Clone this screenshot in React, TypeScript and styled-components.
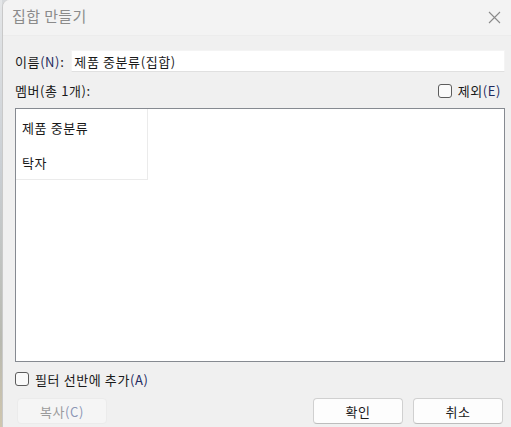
import React from "react";
import styled, { createGlobalStyle } from "styled-components";

const Global = createGlobalStyle`
  html, body { margin: 0; padding: 0; background: #f0f0f0; }
  body { font-family: "Noto Sans CJK KR", "Noto Sans", sans-serif; font-size: 13px; color: #1a1a1a; letter-spacing: 0.6px; }
`;

const Screen = styled.div`
  width: 511px;
  height: 427px;
  display: flex;
  overflow: hidden;
  background: #d6d9dc;
`;

const Edge = styled.div`
  width: 2px;
  background: linear-gradient(#e4e6e8, #c9ced3 40%, #b8b9b0 80%, #d0c6ae);
`;

const Window = styled.div`
  flex: 1;
  display: flex;
  flex-direction: column;
  background: #f0f0f0;
  border-top-left-radius: 7px;
  border-left: 1px solid #c9c9c9;
`;

const TitleBar = styled.div`
  height: 36px;
  display: flex;
  align-items: center;
  justify-content: space-between;
  padding: 0 8px 0 9px;
  background: #f3f3f3;
  border-bottom: 1px solid #ececec;
  box-sizing: border-box;
  border-top-left-radius: 7px;
`;

const Title = styled.span`
  font-size: 15px;
  letter-spacing: 0.4px;
  color: #8b8b8b;
  margin-top: -4px;
`;

const Close = styled.div`
  width: 18px;
  height: 18px;
  display: flex;
  align-items: center;
  justify-content: center;
  margin-top: -1px;
`;

const Body = styled.div`
  flex: 1;
  display: flex;
  flex-direction: column;
  padding: 14px 6px 0 12px;
`;

const Row = styled.div<{ $h: number; $mt?: number }>`
  height: ${(p) => p.$h}px;
  margin-top: ${(p) => p.$mt ?? 0}px;
  display: flex;
  align-items: center;
`;

const Label = styled.span<{ $mr?: number }>`
  white-space: nowrap;
  margin-right: ${(p) => p.$mr ?? 0}px;
`;

const Key = styled.span`
  color: #1f2b5e;
`;

const Input = styled.div`
  margin-left: 7px;
  flex: 1;
  height: 22px;
  background: #fff;
  border: 1px solid #f4f4f4;
  border-bottom-color: #e0e0e0;
  box-sizing: border-box;
  display: flex;
  align-items: center;
  padding-left: 2px;
`;

const Spacer = styled.div`
  flex: 1;
`;

const Check = styled.span`
  width: 12px;
  height: 12px;
  border: 1px solid #5c5c5c;
  border-radius: 3px;
  background: #fafafa;
  margin-right: 6px;
  box-sizing: content-box;
`;

const List = styled.div`
  margin-top: 7px;
  height: 254px;
  background: #fff;
  border: 1px solid #868a91;
  box-sizing: border-box;
`;

const Grid = styled.div`
  width: 131px;
  border-right: 1px solid #ebebeb;
  border-bottom: 1px solid #ebebeb;
  display: flex;
  flex-direction: column;
`;

const Cell = styled.div<{ $h: number }>`
  height: ${(p) => p.$h}px;
  display: flex;
  align-items: center;
  padding-left: 6px;
`;

const Buttons = styled.div`
  margin-top: 9px;
  display: flex;
  align-items: center;
  padding: 0 2px 0 2px;
`;

const Button = styled.div<{ $disabled?: boolean }>`
  width: 90px;
  height: 26px;
  box-sizing: border-box;
  border-radius: 4px;
  display: flex;
  align-items: center;
  justify-content: center;
  background: ${(p) => (p.$disabled ? "#f5f5f5" : "#fdfdfd")};
  border: 1px solid ${(p) => (p.$disabled ? "#ebebeb" : "#d0d0d0")};
  border-bottom-color: ${(p) => (p.$disabled ? "#ebebeb" : "#bdbdbd")};
  color: ${(p) => (p.$disabled ? "#9b9b9b" : "#1a1a1a")};
  & + & {
    margin-left: 10px;
  }
`;

const DisabledKey = styled.span`
  color: #8d97b5;
`;

export default function App() {
  return (
    <>
      <Global />
      <Screen>
        <Edge />
        <Window>
          <TitleBar>
            <Title>집합 만들기</Title>
            <Close>
              <svg width="13" height="13" viewBox="0 0 13 13">
                <path d="M1 1 L12 12 M12 1 L1 12" stroke="#8a8a8a" strokeWidth="1.1" />
              </svg>
            </Close>
          </TitleBar>
          <Body>
            <Row $h={22}>
              <Label>
                이름<Key>(N)</Key>:
              </Label>
              <Input>제품 중분류(집합)</Input>
            </Row>
            <Row $h={21} $mt={8}>
              <Label>
                멤버(총 1개):
              </Label>
              <Spacer />
              <Check />
              <Label $mr={4}>
                제외<Key>(E)</Key>
              </Label>
            </Row>
            <List>
              <Grid>
                <Cell $h={37}>제품 중분류</Cell>
                <Cell $h={33}>탁자</Cell>
              </Grid>
            </List>
            <Row $h={20} $mt={7}>
              <Check />
              <Label>
                필터 선반에 추가<Key>(A)</Key>
              </Label>
            </Row>
            <Buttons>
              <Button $disabled>
                복사<DisabledKey>(C)</DisabledKey>
              </Button>
              <Spacer />
              <Button>확인</Button>
              <Button>취소</Button>
            </Buttons>
          </Body>
        </Window>
      </Screen>
    </>
  );
}
